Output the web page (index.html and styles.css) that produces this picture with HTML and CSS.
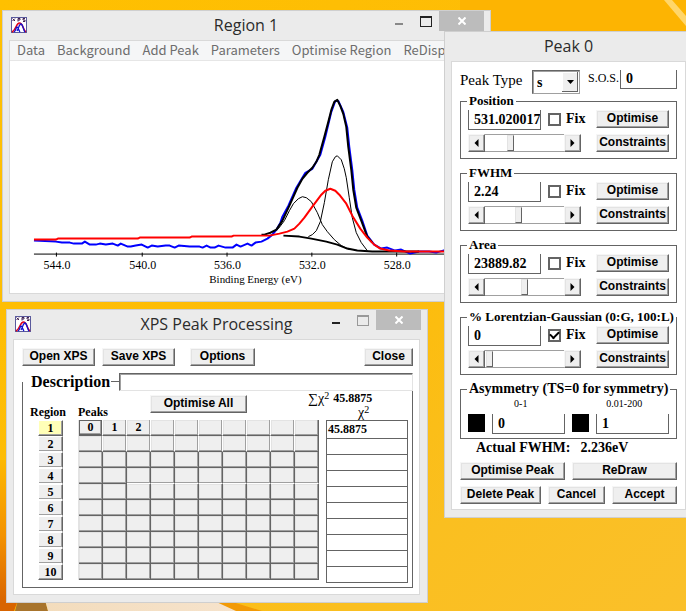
FILE: index.html
```html
<!DOCTYPE html>
<html lang="en">
<head>
<meta charset="utf-8">
<title>XPS Peak</title>
<link rel="stylesheet" href="styles.css">
</head>
<body>
<svg class="wallpaper" viewBox="0 0 686 611" preserveAspectRatio="none">
  <defs>
    <linearGradient id="sky" x1="0" y1="0" x2="1" y2="1">
      <stop offset="0" stop-color="#ffc000"/><stop offset=".5" stop-color="#fdbc08"/><stop offset=".75" stop-color="#fabf20"/><stop offset="1" stop-color="#fac02a"/>
    </linearGradient>
    <linearGradient id="edge" x1="0" y1="0" x2="0" y2="1">
      <stop offset="0" stop-color="#fdb800"/><stop offset=".5" stop-color="#f39200"/><stop offset="1" stop-color="#d65f00"/>
    </linearGradient>
    <linearGradient id="cream" x1="0" y1="0" x2="1" y2="0">
      <stop offset="0" stop-color="#f3dcbc"/><stop offset="1" stop-color="#f6e3cc"/>
    </linearGradient>
  </defs>
  <rect width="686" height="611" fill="url(#sky)"/>
  <path d="M460 0H686V31H491V10H460Z" fill="#fdb402"/>
  <path d="M672 0L686 16V26L664 0Z" fill="#ffd66a"/>
  <rect y="460" width="8" height="151" fill="url(#edge)"/>
  <path d="M0 600H18L14 611H0Z" fill="#d86400"/>
  <path d="M18 600H45L48 611H15Z" fill="#a8742c"/>
  <path d="M45 600H215L240 611H48Z" fill="url(#cream)"/>
  <path d="M212 600H226L262 611H236Z" fill="#f29a06"/>
</svg>

<svg class="defs" width="0" height="0">
  <symbol id="xps" viewBox="0 0 16 16">
    <rect x=".5" y=".5" width="15" height="15" fill="#fff" stroke="#5a5a9c"/>
    <path d="M1.500 1.500L4 4M4 1.500L1.500 4M7 4.500V1.500H9V3H7M14 1.500H12V3H14V4.500H12" fill="none" stroke="#402050"/>
    <path d="M1 15C5 13 5 6 8.500 6S12 13 15 15" fill="none" stroke="#e00018" stroke-width="1.500"/>
    <path d="M3 15C5 14 5 10 6 10S8 14 9 15M6 14C8 11 8 7 10 7S12 13 14 15" fill="none" stroke="#1010d0" stroke-width="1.300"/>
  </symbol>
</svg>

<section class="window region-window">
  <header class="titlebar">
    <svg class="app-icon"><use href="#xps"/></svg>
    <h1>Region 1</h1>
    <div class="caption">
      <button class="min dim"></button><button class="max"></button>
      <button class="close"><svg viewBox="0 0 8 8"><path d="M.5 .5L7.500 7.500M7.500 .5L.5 7.500"/></svg></button>
    </div>
  </header>
  <div class="client">
    <nav class="menu">
      <a href="#">Data</a><a href="#">Background</a><a href="#">Add Peak</a><a href="#">Parameters</a><a href="#">Optimise Region</a><a href="#">ReDisplay</a>
    </nav>
    <svg class="chart" viewBox="10 61 473 232">
      <g fill="none" stroke-linejoin="round">
        <path stroke="#000" d="M34 254.500H483M56.500 253V257M142.500 253V257M227.500 253V257M312.500 253V257M397.500 253V257"/>
        <path stroke="#00f" stroke-width="2" d="M34 241L56 242L62 243L70 243L74 244L82 244L85 242L90 245L96 245L100 244L106 245L113 244L118 246L121 244L128 247L131 247L136 246L142 245L148 248L152 246L158 247L166 246L170 246L175 248L179 246L190 247L200 247L203 248L207 246L211 248L215 248L219 246L226 248L233 248L237 245L241 247L248 244L252 246L256 243L262 242L268 239L273 235L277 230L281 223L283 217L289 206L297 188L306 173L313 169L321 155L326 137L332 112L336 101L339 101L344 112L348 128L350 147L353 170L355 190L358 208L363 221L368 236L375 245L382 249L388 248L396 251L402 250L411 254L420 252L430 252L437 253L444 251L483 252"/>
        <path stroke="#000" stroke-width="2" d="M262 235L265 235L271 233L277 230L283 221L290 206L298 188L303 179L308 173L313 168L317 162L320 155L325 137L329 122L332 110L335 102L338 100L341 106L344 114L347 127L349 147L352 170L354 190L357 208L362 221L368 237L373 243"/>
        <path stroke="#000" stroke-width="2" d="M284 236L300 237L312 239L327 242L338 245L348 249L358 251L373 252H420"/>
        <path stroke="#000" d="M270 234L279 229L285 221L290 211L294 204L299 199L303 197L307 198L312 202L318 213L323 225L328 232L335 240L342 246L350 250"/>
        <path stroke="#000" d="M309 237L313 235L317 231L321 222L325 203L329 180L333 162L336 157L338 156L342 160L345 169L347 178L350 198L353 218L357 233L362 243L368 251"/>
        <path stroke="#f00" stroke-width="2" d="M34 240H56L58 239H138L140 238H190L192 237H232L234 236H270L280 234L288 232L295 229L300 224L305 218L313 207L322 195L326 191L331 189L336 191L340 195L347 204L353 216L361 229L368 238L375 245L381 249L390 251L405 252H483"/>
      </g>
      <g class="ticks">
        <text x="57" y="269">544.0</text><text x="143" y="269">540.0</text><text x="228" y="269">536.0</text><text x="313" y="269">532.0</text><text x="398" y="269">528.0</text>
      </g>
      <text class="axis" x="256" y="283">Binding Energy (eV)</text>
    </svg>
  </div>
</section>

<section class="window main-window">
  <header class="titlebar">
    <svg class="app-icon"><use href="#xps"/></svg>
    <h1>XPS Peak Processing</h1>
    <div class="caption">
      <button class="min"></button><button class="max dim"></button>
      <button class="close"><svg viewBox="0 0 8 8"><path d="M.5 .5L7.500 7.500M7.500 .5L.5 7.500"/></svg></button>
    </div>
  </header>
  <div class="client processing">
    <div class="toolbar">
      <button class="btn file">Open XPS</button><button class="btn file">Save XPS</button><button class="btn options">Options</button><button class="btn quit">Close</button>
    </div>
    <fieldset class="data">
      <legend><label for="desc">Description</label><input id="desc" type="text"></legend>
      <div class="summary">
        <span class="head-region">Region</span><span class="head-peaks">Peaks</span>
        <button class="btn all">Optimise All</button>
        <div class="chi"><div class="total"><span class="sym">∑χ<sup>2</sup></span> <span>45.8875</span></div><div class="sym under">χ<sup>2</sup></div></div>
      </div>
      <div class="grids">
        <div class="regions">
          <button class="active">1</button><button>2</button><button>3</button><button>4</button><button>5</button><button>6</button><button>7</button><button>8</button><button>9</button><button>10</button>
        </div>
        <table class="peaks">
          <tr><td class="current"><button>0</button></td><td><button>1</button></td><td><button>2</button></td><td></td><td></td><td></td><td></td><td></td><td></td><td></td></tr>
          <tr><td></td><td></td><td></td><td></td><td></td><td></td><td></td><td></td><td></td><td></td></tr>
          <tr><td></td><td></td><td></td><td></td><td></td><td></td><td></td><td></td><td></td><td></td></tr>
          <tr><td></td><td></td><td></td><td></td><td></td><td></td><td></td><td></td><td></td><td></td></tr>
          <tr><td></td><td></td><td></td><td></td><td></td><td></td><td></td><td></td><td></td><td></td></tr>
          <tr><td></td><td></td><td></td><td></td><td></td><td></td><td></td><td></td><td></td><td></td></tr>
          <tr><td></td><td></td><td></td><td></td><td></td><td></td><td></td><td></td><td></td><td></td></tr>
          <tr><td></td><td></td><td></td><td></td><td></td><td></td><td></td><td></td><td></td><td></td></tr>
          <tr><td></td><td></td><td></td><td></td><td></td><td></td><td></td><td></td><td></td><td></td></tr>
          <tr><td></td><td></td><td></td><td></td><td></td><td></td><td></td><td></td><td></td><td></td></tr>
        </table>
        <table class="scores">
          <tr><td>45.8875</td></tr><tr><td></td></tr><tr><td></td></tr><tr><td></td></tr><tr><td></td></tr><tr><td></td></tr><tr><td></td></tr><tr><td></td></tr><tr><td></td></tr><tr><td></td></tr>
        </table>
      </div>
    </fieldset>
  </div>
</section>

<section class="window peak-window">
  <header class="titlebar"><h1>Peak 0</h1></header>
  <div class="client peak">
    <div class="type-row">
      <label class="type-label" for="type">Peak Type</label>
      <span class="combo"><select id="type"><option>s</option></select><svg viewBox="0 0 16 20"><path d="M5 8H12L8.500 12Z"/></svg></span>
      <label class="sos-label" for="sos">S.O.S.</label>
      <input class="field sos" id="sos" type="text" value="0">
    </div>
    <fieldset class="param">
      <legend>Position</legend>
      <div class="row"><input class="field" type="text" value="531.020017"><label class="fix"><input type="checkbox">Fix</label><button class="btn">Optimise</button></div>
      <div class="row"><div class="scroll"><button class="btn"><svg viewBox="0 0 5 8"><path d="M4.500 0V8L.5 4Z"/></svg></button><input type="range" min="0" max="72" value="22"><button class="btn"><svg viewBox="0 0 5 8"><path d="M.5 0V8L4.500 4Z"/></svg></button></div><button class="btn">Constraints</button></div>
    </fieldset>
    <fieldset class="param">
      <legend>FWHM</legend>
      <div class="row"><input class="field" type="text" value="2.24"><label class="fix"><input type="checkbox">Fix</label><button class="btn">Optimise</button></div>
      <div class="row"><div class="scroll"><button class="btn"><svg viewBox="0 0 5 8"><path d="M4.500 0V8L.5 4Z"/></svg></button><input type="range" min="0" max="72" value="30"><button class="btn"><svg viewBox="0 0 5 8"><path d="M.5 0V8L4.500 4Z"/></svg></button></div><button class="btn">Constraints</button></div>
    </fieldset>
    <fieldset class="param">
      <legend>Area</legend>
      <div class="row"><input class="field" type="text" value="23889.82"><label class="fix"><input type="checkbox">Fix</label><button class="btn">Optimise</button></div>
      <div class="row"><div class="scroll"><button class="btn"><svg viewBox="0 0 5 8"><path d="M4.500 0V8L.5 4Z"/></svg></button><input type="range" min="0" max="72" value="36"><button class="btn"><svg viewBox="0 0 5 8"><path d="M.5 0V8L4.500 4Z"/></svg></button></div><button class="btn">Constraints</button></div>
    </fieldset>
    <fieldset class="param">
      <legend>% Lorentzian-Gaussian (0:G, 100:L)</legend>
      <div class="row"><input class="field" type="text" value="0"><label class="fix"><input type="checkbox" checked>Fix</label><button class="btn">Optimise</button></div>
      <div class="row"><div class="scroll"><button class="btn"><svg viewBox="0 0 5 8"><path d="M4.500 0V8L.5 4Z"/></svg></button><input type="range" min="0" max="72" value="1"><button class="btn"><svg viewBox="0 0 5 8"><path d="M.5 0V8L4.500 4Z"/></svg></button></div><button class="btn">Constraints</button></div>
    </fieldset>
    <fieldset class="param asym">
      <legend>Asymmetry (TS=0 for symmetry)</legend>
      <div class="ranges">
        <label for="ts">0-1</label><label for="tl">0.01-200</label>
      </div>
      <div class="asym-row"><span class="swatch"></span><input class="field" id="ts" type="text" value="0"><span class="swatch"></span><input class="field" id="tl" type="text" value="1"></div>
    </fieldset>
    <p class="actual"><span>Actual FWHM:</span><span>2.236eV</span></p>
    <div class="actions two"><button class="btn">Optimise Peak</button><button class="btn">ReDraw</button></div>
    <div class="actions three"><button class="btn">Delete Peak</button><button class="btn">Cancel</button><button class="btn">Accept</button></div>
  </div>
</section>
</body>
</html>
```

FILE: styles.css
```css
:root {
  --dark: #646464;
  --mid: #a0a0a0;
  --light: #e3e3e3;
  --face: #efefef;
}

* { box-sizing: border-box; }

body {
  margin: 0;
  min-height: 100vh;
  overflow: hidden;
  position: relative;
  background: #fdb902;
  color: #000;
  font: bold 12px/14px "Liberation Serif", serif;
}

button, input, select { font: inherit; color: inherit; margin: 0; padding: 0; border-radius: 0; }
fieldset { margin: 0; min-width: 0; border: 1px solid var(--dark); }
table { border-collapse: separate; border-spacing: 0; }

.wallpaper { position: absolute; inset: 0; width: 100%; height: 100%; }
.defs { position: absolute; }

/* Window frames */
.window {
  position: absolute;
  padding: 0 7px 7px 6px;
  border: 1px solid #cfcfcf;
  background: #ebebeb;
}
.region-window { left: 2px; top: 10px; width: 489px; }
.main-window { left: 6px; top: 309px; width: 422px; }
.peak-window { left: 444px; top: 31px; width: 250px; }

.titlebar { display: flex; height: 29px; position: relative; }
.titlebar h1 {
  flex: 1;
  margin: 0;
  color: #2b2b2b;
  text-align: center;
  font: 16px/29px "Open Sans", sans-serif;
}
.app-icon { position: absolute; left: 2px; top: 6px; width: 16px; height: 16px; }
.caption { position: absolute; right: -1px; top: 0; display: flex; }
.caption button { width: 27px; height: 20px; border: 0; background: none; display: grid; place-items: center; }
.caption .min::before { content: ""; width: 8px; height: 2px; margin-top: 6px; background: #222; }
.caption .min.dim::before { background: #888; }
.caption .max::before { content: ""; width: 10px; height: 8px; border: 1px solid #222; border-top-width: 2px; }
.caption .max.dim::before { border-color: #999; }
.caption .close { width: 45px; background: #bcbcbc; }
.close svg { width: 8px; height: 8px; stroke: #fff; stroke-width: 2; }

.client { border: 1px solid #d9d9d9; background: #fff; }

/* Region window */
.menu {
  display: flex;
  gap: 12px;
  height: 20px;
  padding-left: 7px;
  overflow: hidden;
  border-bottom: 1px solid #e6e6e6;
  background: #f5f6f7;
}
.menu a { color: #6d6d6d; text-decoration: none; white-space: nowrap; font: 13px/18px "Noto Sans CJK SC", sans-serif; }
.chart { display: block; width: 100%; }
.chart text { font-weight: normal; text-anchor: middle; }
.ticks text { font-size: 12px; }
.axis { font-size: 11px; }

/* Push buttons */
.btn {
  height: 18px;
  padding-bottom: 2px;
  border: 1px solid;
  border-color: #f6f6f6 var(--dark) var(--dark) #f6f6f6;
  background: var(--face);
  box-shadow: inset -1px -1px var(--mid), inset 1px 1px var(--light);
  font: bold 12px/14px "Liberation Sans", sans-serif;
  white-space: nowrap;
}

/* Processing window */
.processing { padding: 8px 6px 6px 8px; }
.toolbar { display: flex; gap: 7px; }
.file { width: 73px; }
.options { width: 65px; margin-left: 8px; }
.quit { width: 49px; margin-left: auto; }

.data { margin-top: 7px; padding: 0 0 4px; }
.data legend { display: flex; width: 100%; height: 18px; padding: 0 0 0 7px; position: relative; right: -1px; background: #fff; }
.data legend label { font-size: 16px; line-height: 18px; }
.data legend label::after { content: ""; display: inline-block; width: 8px; height: 1px; margin-left: 1px; vertical-align: 5px; background: var(--dark); }
.data legend input { flex: 1; min-width: 0; border: 1px solid var(--light); border-top-color: var(--dark); border-left-color: var(--dark); box-shadow: inset 1px 1px var(--mid); outline: 0; }

.summary { display: flex; align-items: flex-end; height: 29px; padding: 0 0 1px 7px; }
.head-region { width: 48px; }
.head-peaks { width: 72px; }
.all { width: 97px; align-self: flex-start; margin-top: 4px; }
.chi { margin-left: 61px; align-self: flex-start; }
.total { display: flex; gap: 4px; height: 14px; line-height: 14px; }
.sym { font-weight: normal; font-size: 14px; line-height: 14px; }
.sym sup { font-size: 10px; line-height: 1; vertical-align: 4px; }
.under { padding-left: 50px; }

.grids { display: flex; align-items: flex-start; padding-left: 15px; }
.regions { display: grid; width: 25px; }
.regions button { height: 16px; border: 1px solid #fff; border-right-color: var(--dark); background: var(--face); box-shadow: inset -1px -1px var(--mid); line-height: 14px; }
.regions .active { background: #ffffb8; border-bottom-color: var(--dark); }
.regions button:last-child { border-bottom-color: var(--dark); }

.peaks { margin-left: 15px; border-left: 1px solid var(--light); }
.peaks td {
  width: 24px;
  height: 16px;
  padding: 0;
  border-right: 1px solid var(--dark);
  border-bottom: 1px solid var(--dark);
  background: var(--face);
  box-shadow: inset -1px -1px var(--mid), inset 1px 1px var(--light);
}
.peaks tr:nth-child(-n+2) td:not(:last-child) { border-right-color: #fff; }
.peaks tr:nth-child(4) td:nth-child(n+3) { border-bottom-color: #fff; }
.peaks button { display: block; width: 100%; height: 15px; border: 0; background: none; line-height: 15px; }
.peaks .current { box-shadow: inset 0 0 0 1px var(--dark), inset -2px -2px var(--mid); }

.scores { margin-left: 7px; width: 82px; border: 1px solid var(--dark); border-bottom: 0; }
.scores td { height: 16px; padding: 0 1px; line-height: 15px; border-bottom: 1px solid var(--dark); }
.scores tr:first-child td { height: 18px; }

/* Peak window */
.peak { padding: 8px 8px 5px; }
.type-row { display: flex; height: 24px; }
.type-label { width: 72px; font: 15px/20px "Liberation Serif", serif; }
.combo { position: relative; width: 48px; height: 24px; }
.combo select { appearance: none; width: 100%; height: 100%; padding: 2px 0 0 4px; border: 1px solid var(--mid); border-top-color: var(--dark); border-left-color: var(--dark); box-shadow: inset 1px 1px var(--mid); background: #fff; font-size: 14px; }
.combo svg { position: absolute; right: 2px; top: 2px; width: 16px; height: 20px; background: var(--face); box-shadow: inset -1px -1px var(--dark), inset 1px 1px #fff; pointer-events: none; }
.sos-label { width: 40px; padding-left: 8px; font-weight: normal; line-height: 16px; }

.field { width: 73px; height: 20px; padding: 0 0 0 5px; border: 1px solid var(--dark); border-top: 0; background: #fff; font-size: 14px; outline: 0; }
.sos { flex: 1; min-width: 0; height: 19px; }

.param { padding: 2px 7px 6px; margin-bottom: 7px; }
.param legend { height: 14px; margin-left: -1px; padding: 0 2px; font-size: 13px; white-space: nowrap; }
.row { display: flex; justify-content: space-between; }
.row + .row { margin-top: 4px; }
.row > .btn { width: 73px; }
.fix { display: flex; align-items: center; gap: 5px; width: 55px; height: 18px; padding-left: 7px; font-size: 14px; }
.fix input { appearance: none; width: 13px; height: 13px; border: 2px solid var(--dark); background: #fff; }
.fix input:checked { display: grid; place-items: center; }
.fix input:checked::before { content: ""; width: 7px; height: 4px; margin-top: -3px; border: solid #000; border-width: 0 0 2px 2px; transform: rotate(-45deg); }

.scroll { display: flex; width: 113px; height: 18px; }
.scroll .btn { display: grid; place-items: center; width: 17px; padding: 0; }
.scroll svg { width: 5px; height: 8px; }
.scroll input { appearance: none; flex: 1; min-width: 0; height: 18px; border: solid var(--mid); border-width: 1px 0; background: #fff; }
.scroll input::-webkit-slider-thumb { appearance: none; width: 7px; height: 16px; border: 1px solid var(--light); border-right-color: var(--dark); border-bottom-color: var(--dark); background: var(--face); }

.asym { margin-bottom: 0; padding: 1px 7px 4px; }
.asym legend { font-size: 14px; }
.ranges { display: grid; grid-template-columns: 1fr 1fr; gap: 14px; height: 17px; padding: 2px 0 0 8px; font: 10px/10px "Liberation Serif", serif; text-align: center; }
.asym-row { display: flex; gap: 7px; }
.asym-row .field { flex: 1; min-width: 0; }
.swatch { width: 17px; height: 18px; background: #000; }

.actual { display: flex; gap: 10px; margin: 0; padding: 2px 0 7px 16px; font-size: 14px; line-height: 14px; }
.actions { display: grid; gap: 7px; }
.two { grid-template-columns: 1fr 1fr; margin-bottom: 6px; }
.three { grid-template-columns: 81fr 57fr 65fr; }
```
